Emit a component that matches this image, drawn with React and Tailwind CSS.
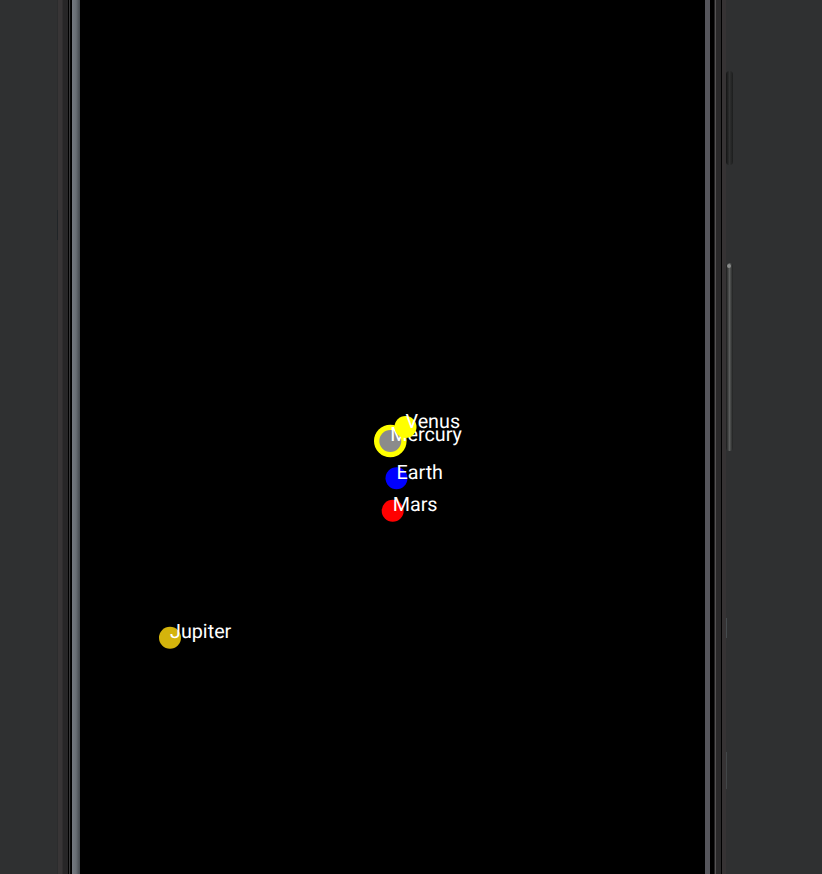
const planets = [
  { name: "Mercury", x: 390.3, y: 441, baseline: 441.4, color: "#8b8b8b" },
  { name: "Venus", x: 405.5, y: 427, baseline: 427.7, color: "#ffff00" },
  { name: "Earth", x: 396.5, y: 478.3, baseline: 478.7, color: "#0000ff" },
  { name: "Mars", x: 392.7, y: 510.7, baseline: 510.9, color: "#ff0000" },
  { name: "Jupiter", x: 170, y: 637.8, baseline: 638, color: "#d4b40c" },
];

function SolarSystem() {
  return (
    <svg className="block h-[874px] w-[625px] shrink-0 bg-black" viewBox="80 0 625 874">
      <circle cx="390.3" cy="441" r="16.3" fill="#ffff00" />
      {planets.map((p) => (
        <g key={p.name}>
          <circle cx={p.x} cy={p.y} r="11" fill={p.color} />
          <text
            x={p.x}
            y={p.baseline}
            fill="#ffffff"
            fontSize="19.75"
            fontFamily="Roboto, sans-serif"
            textRendering="geometricPrecision"
          >
            {p.name}
          </text>
        </g>
      ))}
    </svg>
  );
}

function LeftFrame() {
  return (
    <div className="flex shrink-0">
      <div className="w-px bg-[#2b2c2d]">
        <div className="mt-[210px] h-[30px] bg-[#202427]" />
      </div>
      <div className="w-1 bg-[#383536]" />
      <div className="w-px bg-[#302e2f]" />
      <div className="w-[5px] bg-[#272627]" />
      <div className="w-px bg-black" />
      <div className="w-px bg-[#3a3a3b]" />
      <div className="w-px bg-[#080808]" />
      <div className="w-px bg-black" />
      <div className="w-2 bg-linear-to-r from-[#747980] via-[#686e74] to-[#42474c]" />
    </div>
  );
}

function RightFrame() {
  return (
    <div className="flex shrink-0">
      <div className="w-[5px] bg-[#56565c]" />
      <div className="w-1 bg-black" />
      <div className="w-px bg-[#242324]" />
      <div className="w-px bg-[#555354]" />
      <div className="w-[5px] bg-[#2a292a]" />
      <div className="w-px bg-black" />
      <div className="w-1 bg-[#363334]" />
    </div>
  );
}

function SideButtons() {
  return (
    <div className="flex w-[7px] shrink-0 flex-col">
      <div className="mt-[71px] h-[94px] w-[7px] rounded-sm bg-linear-to-r from-[#131414] via-[#303131] to-[#1c1d1d]" />
      <div className="mt-[98px] flex h-[188px] w-[7px] flex-col items-start rounded-sm bg-linear-to-r from-[#1b1c1c] via-[#5b5d5c] to-[#202121]">
        <div className="ml-px mt-px h-1 w-1 rounded-full bg-[#8a8c8b]" />
      </div>
      <div className="mt-[167px] h-5 w-px bg-[#454b4e]" />
      <div className="mt-[114px] h-[37px] w-px bg-[#424648]" />
    </div>
  );
}

export default function App() {
  return (
    <main className="flex h-[874px] w-[822px] overflow-hidden bg-[#2f3031]">
      <div className="w-[57px] shrink-0" />
      <LeftFrame />
      <SolarSystem />
      <RightFrame />
      <SideButtons />
    </main>
  );
}
